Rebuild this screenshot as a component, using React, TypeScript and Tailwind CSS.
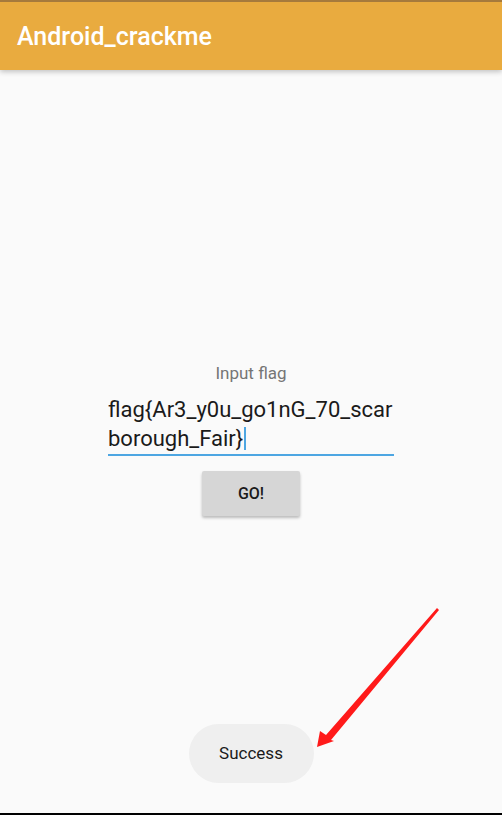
import React from "react";

const Arrow = () => (
  <svg
    className="pointer-events-none absolute left-0 top-0"
    width="502"
    height="815"
    viewBox="0 0 502 815"
  >
    <polygon
      points="317,747 320,731 326,735 437,608 439,610 331,740 334,741"
      fill="#FF1A1A"
    />
  </svg>
);

export default function App() {
  return (
    <div
      className="relative flex h-[815px] w-[502px] flex-col overflow-hidden bg-[#FAFAFA]"
      style={{ fontFamily: "Roboto, 'Noto Sans', sans-serif" }}
    >
      <header className="flex h-[70px] shrink-0 items-center border-t-2 border-[#A67A3C] bg-[#E9AB3F] pl-[17px] shadow-[0_2px_5px_rgba(0,0,0,0.22)]">
        <h1 className="text-[25px] font-medium leading-none text-white">Android_crackme</h1>
      </header>

      <main className="flex flex-1 flex-col items-center">
        <p className="mt-[293px] text-[17px] leading-[20px] text-[#757575]">Input flag</p>

        <div className="mt-[13px] w-[286px] border-b-2 border-[#4DA6E2] pb-[2px]">
          <p className="whitespace-nowrap text-[22px] leading-[27px] text-[#1A1A1A]">
            flag{"{"}Ar3_y0u_go1nG_70_scar
            <br />
            borough_Fair{"}"}
            <span className="ml-[1px] inline-block h-[23px] w-[2px] translate-y-[4px] bg-[#4DA6E2]" />
          </p>
        </div>

        <button className="mt-[15px] h-[45px] w-[98px] rounded-[2px] bg-[#D6D6D6] text-[16px] font-medium text-[#1A1A1A] shadow-[0_2px_3px_rgba(0,0,0,0.25)]">
          GO!
        </button>

        <div className="mt-auto mb-[30px] flex h-[59px] w-[125px] items-center justify-center rounded-full bg-[#EFEFEF] text-[17px] text-[#1A1A1A]">
          Success
        </div>
      </main>

      <div className="h-[2px] shrink-0 bg-black" />
      <Arrow />
    </div>
  );
}
